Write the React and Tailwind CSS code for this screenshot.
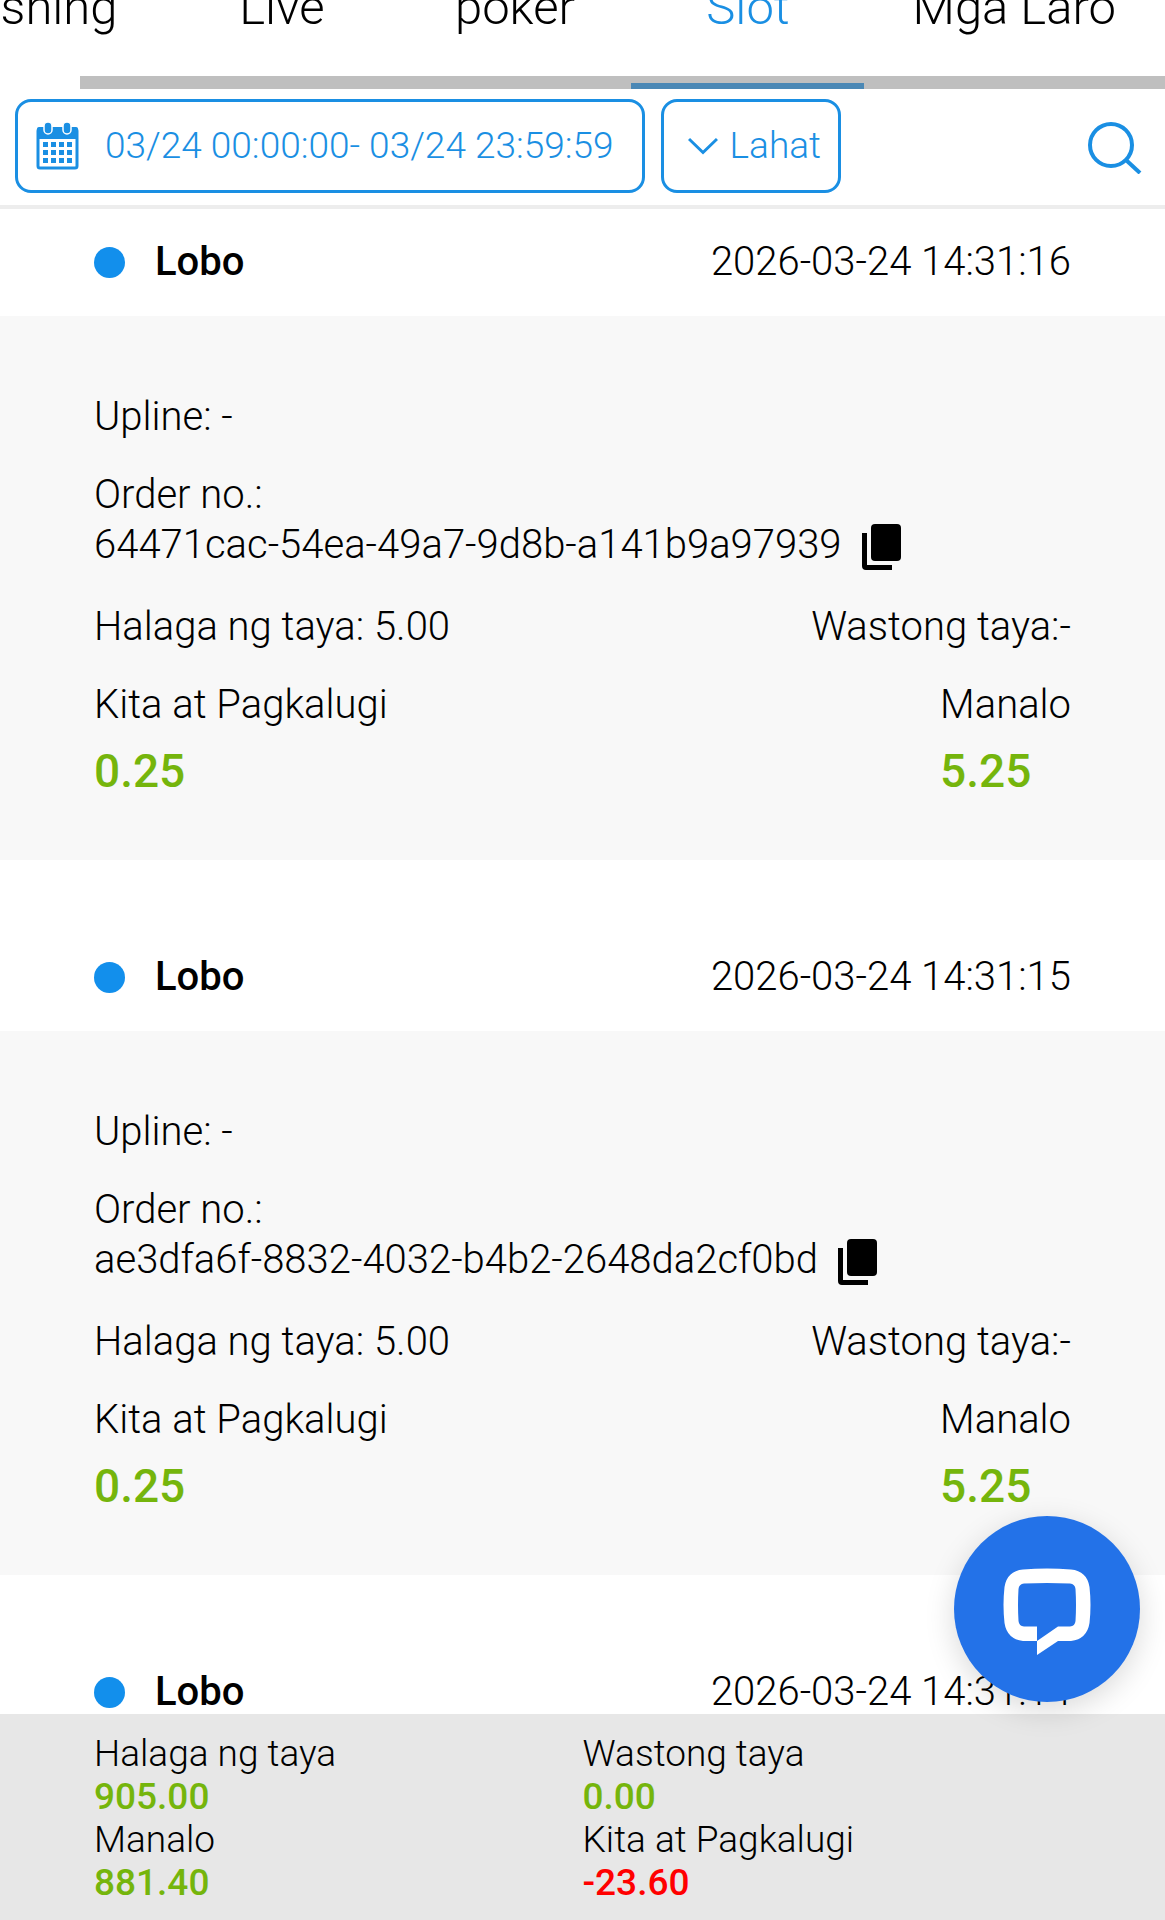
import { useState } from 'react'
import clsx from 'clsx'

const tabs = ['Fishing', 'Live', 'poker', 'Slot', 'Mga Laro']

const records = [
  {
    game: 'Lobo',
    time: '2026-03-24 14:31:16',
    upline: '-',
    orderNo: '64471cac-54ea-49a7-9d8b-a141b9a97939',
    bet: '5.00',
    validBet: '-',
    profit: '0.25',
    win: '5.25',
  },
  {
    game: 'Lobo',
    time: '2026-03-24 14:31:15',
    upline: '-',
    orderNo: 'ae3dfa6f-8832-4032-b4b2-2648da2cf0bd',
    bet: '5.00',
    validBet: '-',
    profit: '0.25',
    win: '5.25',
  },
  { game: 'Lobo', time: '2026-03-24 14:31:14' },
]

const totals = [
  { label: 'Halaga ng taya', value: '905.00' },
  { label: 'Wastong taya', value: '0.00' },
  { label: 'Manalo', value: '881.40' },
  { label: 'Kita at Pagkalugi', value: '-23.60' },
]

function CalendarIcon() {
  return (
    <svg width="43" height="48" viewBox="0 0 43 48" aria-hidden="true" className="shrink-0">
      <rect x="2" y="7" width="39" height="39" rx="2" fill="none" stroke="currentColor" strokeWidth="3" />
      <rect x="1" y="5" width="41" height="12" rx="2" fill="currentColor" />
      <g fill="currentColor" stroke="#fff" strokeWidth="1.5">
        <rect x="8" y="0" width="8" height="12" rx="4" />
        <rect x="27" y="0" width="8" height="12" rx="4" />
      </g>
      <g fill="currentColor">
        {[20, 28, 36].map((y) =>
          [7, 15, 23, 31].map((x) => <rect key={`${x}-${y}`} x={x} y={y} width="5" height="5" />)
        )}
      </g>
    </svg>
  )
}

function ChevronIcon() {
  return (
    <svg width="30" height="18" viewBox="0 0 30 18" fill="none" stroke="currentColor" strokeWidth="3" aria-hidden="true" className="shrink-0">
      <path d="M1 2l14 13.500L29 2" />
    </svg>
  )
}

function SearchIcon() {
  return (
    <svg width="54" height="52" viewBox="0 0 54 52" fill="none" stroke="currentColor" strokeWidth="4" aria-hidden="true">
      <circle cx="23" cy="23" r="21" />
      <path d="M38 38l14 13" />
    </svg>
  )
}

function CopyIcon() {
  return (
    <svg width="39" height="46" viewBox="0 0 39 46" fill="currentColor" aria-hidden="true">
      <rect x="9" y="0" width="30" height="37" rx="4" />
      <path d="M0 9h5v32h25v5H4a4 4 0 0 1-4-4z" />
    </svg>
  )
}

function ChatIcon() {
  return (
    <svg width="88" height="87" viewBox="0 0 88 87" aria-hidden="true">
      <path
        fill="#fff"
        fillRule="evenodd"
        d="M20 1.500Q44-.5 68 1.500Q84 3 86.500 19Q88.500 37 86.500 55Q84 71 68 73H55L34 87V73H20Q4 71 1.500 55Q-.5 37 1.500 19Q4 3 20 1.500ZM21 15.500Q16 16 15.500 21Q14.500 37 15.500 53Q16 58 21 58.500H34V73L55 58.500H67Q72 58 72.500 53Q73.500 37 72.500 21Q72 16 67 15.500Q44 14.500 21 15.500Z"
      />
    </svg>
  )
}

function Record({ record }) {
  return (
    <article className="mb-16">
      <header className="flex h-[107px] items-center justify-between px-[94px] pb-0.5">
        <h2 className="flex items-center gap-[30px] font-medium">
          <span className="mt-0.5 size-[31px] rounded-full bg-[#128fec]" />
          {record.game}
        </h2>
        <time>{record.time}</time>
      </header>

      {record.orderNo && (
        <div className="space-y-7 bg-[#f8f8f8] px-[94px] pt-[76px] pb-[62px]">
          <p>Upline: {record.upline}</p>
          <div>
            <p>Order no.:</p>
            <div className="flex items-center gap-5">
              <span>{record.orderNo}</span>
              <button aria-label="Copy" className="pt-1">
                <CopyIcon />
              </button>
            </div>
          </div>
          <div className="flex justify-between pt-1">
            <p>Halaga ng taya: {record.bet}</p>
            <p>Wastong taya:{record.validBet}</p>
          </div>
          <div className="flex justify-between">
            <div>
              <p>Kita at Pagkalugi</p>
              <p className="mt-3.5 text-[46px] leading-[54px] font-medium text-[#75b50c]">{record.profit}</p>
            </div>
            <div>
              <p>Manalo</p>
              <p className="mt-3.5 text-[46px] leading-[54px] font-medium text-[#75b50c]">{record.win}</p>
            </div>
          </div>
        </div>
      )}
    </article>
  )
}

export default function App() {
  const [active, setActive] = useState('Slot')

  return (
    <div className="flex h-screen flex-col overflow-hidden bg-white font-['Roboto',sans-serif] text-[40px] leading-[50px] font-light text-black">
      <nav className="relative shrink-0 overflow-hidden">
        {/* track under the tabs, starts a little way in because the list is scrolled */}
        <div className="absolute right-0 bottom-0 left-20 h-[13px] bg-[#bfbfbf]" />
        <div className="relative -mt-10 -ml-[86px] flex">
          {tabs.map((tab) => (
            <button
              key={tab}
              onClick={() => setActive(tab)}
              className={clsx(
                'min-w-[233px] shrink-0 border-b-[6px] px-12 pt-[18px] pb-[45px] text-[49px] leading-[60px]',
                tab === active ? 'border-[#4b88b5] text-[#1a8fe3]' : 'border-transparent'
              )}
            >
              {tab}
            </button>
          ))}
        </div>
      </nav>

      <div className="flex shrink-0 items-center gap-4 border-b-4 border-[#ededed] px-[15px] pt-[10px] pb-3 text-[37px] text-[#1a8fe3]">
        <button className="flex h-[94px] items-center gap-[26px] rounded-2xl border-3 pr-7 pl-[18px]">
          <CalendarIcon />
          <span>03/24 00:00:00- 03/24 23:59:59</span>
        </button>
        <label className="flex h-[94px] items-center gap-3 rounded-2xl border-3 pr-4 pl-6">
          <ChevronIcon />
          <select aria-label="Status" className="appearance-none bg-transparent outline-none">
            <option>Lahat</option>
          </select>
        </label>
        <button aria-label="Search" className="mr-2 ml-auto pt-1">
          <SearchIcon />
        </button>
      </div>

      <main className="min-h-0 flex-1 overflow-hidden">
        {records.map((record) => (
          <Record key={record.time} record={record} />
        ))}
      </main>

      <footer className="grid shrink-0 grid-cols-2 bg-[#e7e7e7] px-[94px] pt-[18px] pb-4 text-[37px] leading-[43px]">
        {totals.map(({ label, value }) => (
          <div key={label}>
            <p>{label}</p>
            <p className={clsx('font-medium', value.startsWith('-') ? 'text-[#ff0000]' : 'text-[#75b50c]')}>{value}</p>
          </div>
        ))}
      </footer>

      <button
        aria-label="Chat"
        className="fixed right-[25px] bottom-[218px] flex size-[186px] items-center justify-center rounded-full bg-[#2372e8] pt-1 shadow-[0_8px_30px_rgba(0,0,0,0.15)]"
      >
        <ChatIcon />
      </button>
    </div>
  )
}
